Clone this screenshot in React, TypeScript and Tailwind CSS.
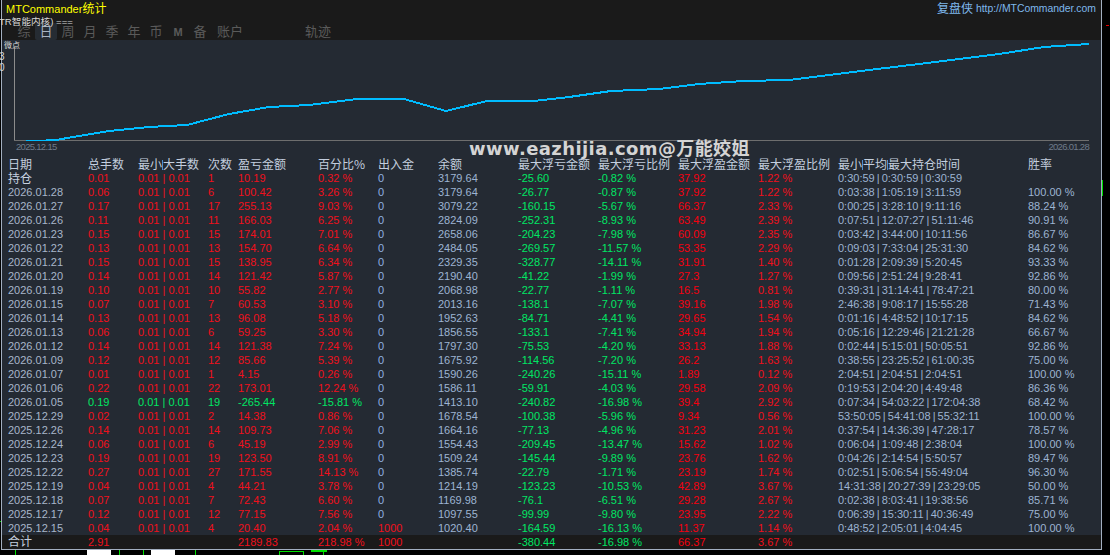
const cols = "grid grid-cols-[80px_50px_70px_30px_80px_60px_60px_80px_80px_80px_80px_80px_190px_70px]";

const red = "text-[#f0101c]";
const green = "text-[#00e664]";
const blue = "text-[#9db4d2]";

const headers = ["日期", "总手数", "最小|大手数", "次数", "盈亏金额", "百分比%", "出入金", "余额", "最大浮亏金额", "最大浮亏比例", "最大浮盈金额", "最大浮盈比例", "最小|平均|最大持仓时间", "胜率"];

// date, lots, trades, profit, pct, cash, balance, maxLoss, lossPct, maxGain, gainPct, times, winRate
const rows: string[][] = [
  ["持仓", "0.01", "1", "10.19", "0.32 %", "0", "3179.64", "-25.60", "-0.82 %", "37.92", "1.22 %", "0:30:59 | 0:30:59 | 0:30:59", ""],
  ["2026.01.28", "0.06", "6", "100.42", "3.26 %", "0", "3179.64", "-26.77", "-0.87 %", "37.92", "1.22 %", "0:03:38 | 1:05:19 | 3:11:59", "100.00 %"],
  ["2026.01.27", "0.17", "17", "255.13", "9.03 %", "0", "3079.22", "-160.15", "-5.67 %", "66.37", "2.33 %", "0:00:25 | 3:28:10 | 9:11:16", "88.24 %"],
  ["2026.01.26", "0.11", "11", "166.03", "6.25 %", "0", "2824.09", "-252.31", "-8.93 %", "63.49", "2.39 %", "0:07:51 | 12:07:27 | 51:11:46", "90.91 %"],
  ["2026.01.23", "0.15", "15", "174.01", "7.01 %", "0", "2658.06", "-204.23", "-7.98 %", "60.09", "2.35 %", "0:03:42 | 3:44:00 | 10:11:56", "86.67 %"],
  ["2026.01.22", "0.13", "13", "154.70", "6.64 %", "0", "2484.05", "-269.57", "-11.57 %", "53.35", "2.29 %", "0:09:03 | 7:33:04 | 25:31:30", "84.62 %"],
  ["2026.01.21", "0.15", "15", "138.95", "6.34 %", "0", "2329.35", "-328.77", "-14.11 %", "31.91", "1.40 %", "0:01:28 | 2:09:39 | 5:20:45", "93.33 %"],
  ["2026.01.20", "0.14", "14", "121.42", "5.87 %", "0", "2190.40", "-41.22", "-1.99 %", "27.3", "1.27 %", "0:09:56 | 2:51:24 | 9:28:41", "92.86 %"],
  ["2026.01.19", "0.10", "10", "55.82", "2.77 %", "0", "2068.98", "-22.77", "-1.11 %", "16.5", "0.81 %", "0:39:31 | 31:14:41 | 78:47:21", "80.00 %"],
  ["2026.01.15", "0.07", "7", "60.53", "3.10 %", "0", "2013.16", "-138.1", "-7.07 %", "39.16", "1.98 %", "2:46:38 | 9:08:17 | 15:55:28", "71.43 %"],
  ["2026.01.14", "0.13", "13", "96.08", "5.18 %", "0", "1952.63", "-84.71", "-4.41 %", "29.65", "1.54 %", "0:01:16 | 4:48:52 | 10:17:15", "84.62 %"],
  ["2026.01.13", "0.06", "6", "59.25", "3.30 %", "0", "1856.55", "-133.1", "-7.41 %", "34.94", "1.94 %", "0:05:16 | 12:29:46 | 21:21:28", "66.67 %"],
  ["2026.01.12", "0.14", "14", "121.38", "7.24 %", "0", "1797.30", "-75.53", "-4.20 %", "33.13", "1.88 %", "0:02:44 | 5:15:01 | 50:05:51", "92.86 %"],
  ["2026.01.09", "0.12", "12", "85.66", "5.39 %", "0", "1675.92", "-114.56", "-7.20 %", "26.2", "1.63 %", "0:38:55 | 23:25:52 | 61:00:35", "75.00 %"],
  ["2026.01.07", "0.01", "1", "4.15", "0.26 %", "0", "1590.26", "-240.26", "-15.11 %", "1.89", "0.12 %", "2:04:51 | 2:04:51 | 2:04:51", "100.00 %"],
  ["2026.01.06", "0.22", "22", "173.01", "12.24 %", "0", "1586.11", "-59.91", "-4.03 %", "29.58", "2.09 %", "0:19:53 | 2:04:20 | 4:49:48", "86.36 %"],
  ["2026.01.05", "0.19", "19", "-265.44", "-15.81 %", "0", "1413.10", "-240.82", "-16.98 %", "39.4", "2.92 %", "0:07:34 | 54:03:22 | 172:04:38", "68.42 %"],
  ["2025.12.29", "0.02", "2", "14.38", "0.86 %", "0", "1678.54", "-100.38", "-5.96 %", "9.34", "0.56 %", "53:50:05 | 54:41:08 | 55:32:11", "100.00 %"],
  ["2025.12.26", "0.14", "14", "109.73", "7.06 %", "0", "1664.16", "-77.13", "-4.96 %", "31.23", "2.01 %", "0:37:54 | 14:36:39 | 47:28:17", "78.57 %"],
  ["2025.12.24", "0.06", "6", "45.19", "2.99 %", "0", "1554.43", "-209.45", "-13.47 %", "15.62", "1.02 %", "0:06:04 | 1:09:48 | 2:38:04", "100.00 %"],
  ["2025.12.23", "0.19", "19", "123.50", "8.91 %", "0", "1509.24", "-145.44", "-9.89 %", "23.76", "1.62 %", "0:04:26 | 2:14:54 | 5:50:57", "89.47 %"],
  ["2025.12.22", "0.27", "27", "171.55", "14.13 %", "0", "1385.74", "-22.79", "-1.71 %", "23.19", "1.74 %", "0:02:51 | 5:06:54 | 55:49:04", "96.30 %"],
  ["2025.12.19", "0.04", "4", "44.21", "3.78 %", "0", "1214.19", "-123.23", "-10.53 %", "42.89", "3.67 %", "14:31:38 | 20:27:39 | 23:29:05", "50.00 %"],
  ["2025.12.18", "0.07", "7", "72.43", "6.60 %", "0", "1169.98", "-76.1", "-6.51 %", "29.28", "2.67 %", "0:02:38 | 8:03:41 | 19:38:56", "85.71 %"],
  ["2025.12.17", "0.12", "12", "77.15", "7.56 %", "0", "1097.55", "-99.99", "-9.80 %", "23.95", "2.22 %", "0:06:39 | 15:30:11 | 40:36:49", "75.00 %"],
  ["2025.12.15", "0.04", "4", "20.40", "2.04 %", "1000", "1020.40", "-164.59", "-16.13 %", "11.37", "1.14 %", "0:48:52 | 2:05:01 | 4:04:45", "100.00 %"],
];

const tabs = ["综", "日", "周", "月", "季", "年", "币", "M", "备"];

const linePoints = "17,102 37,101 57,100 80,96 110,91 150,87 188,85 230,74 270,67 310,65 358,59 405,59 447,71 488,61 535,61 570,57 612,51 660,49 700,44 745,41 790,40 830,35 870,30 920,24 960,19 1000,14 1045,7 1090,4";

// the pipes in the header squeeze in between the glyphs
function HeaderCell({ text }: { text: string }) {
  const parts = text.split("|");
  return (
    <span className="whitespace-nowrap">
      {parts.map((p, i) => (
        <span key={p}>
          {i > 0 && <span className="inline-block w-[1px] h-[10px] bg-[#4f8fd0] align-[-1px]" />}
          {p}
        </span>
      ))}
    </span>
  );
}

function Row({ r }: { r: string[] }) {
  const [date, lots, trades, profit, pct, cash, balance, maxLoss, lossPct, maxGain, gainPct, times, winRate] = r;
  const c = profit.startsWith("-") ? green : red;
  const holding = date === "持仓";
  return (
    <div className={`${cols} h-[14px] items-center`}>
      <span className={holding ? "text-[12px] text-[#c8d2e0] font-['Noto_Sans_CJK_SC']" : "text-[#a8b6ca]"}>{date}</span>
      <span className={c}>{lots}</span>
      <span className={c}>0.01 | 0.01</span>
      <span className={c}>{trades}</span>
      <span className={c}>{profit}</span>
      <span className={c}>{pct}</span>
      <span className={cash === "0" ? "text-[#8fb0e0]" : red}>{cash}</span>
      <span className={blue}>{balance}</span>
      <span className={green}>{maxLoss}</span>
      <span className={green}>{lossPct}</span>
      <span className="text-[#f5000f]">{maxGain}</span>
      <span className={red}>{gainPct}</span>
      <span className={`${blue} [word-spacing:-1px]`}>{times}</span>
      <span className={blue}>{winRate}</span>
    </div>
  );
}

export default function App() {
  return (
    <div className="w-[1110px] h-[555px] bg-black overflow-hidden flex flex-col font-['Liberation_Sans','Noto_Sans_CJK_SC',sans-serif] text-[11px] leading-[14px]">
      <div className="flex h-[550px] shrink-0">
        {/* left edge of the chart behind the window */}
        <div className="w-[2px] relative">
          <div className="absolute left-0 top-[521px] w-[2px] h-[1px] bg-[#00e000]" />
        </div>

        <div className="relative w-[1101px] flex flex-col border-x border-b border-[#a3afc0]">
          {/* title bar */}
          <div className="h-[40px] shrink-0 bg-[#1a1a1a] flex flex-col">
            <div className="h-[23px] flex justify-between items-start pl-[4px] pr-[5px] pt-[2px]">
              <span className="text-[11px] text-[#ffff00]">MTCommander<span className="text-[12px]">统计</span></span>
              <span className="text-[#7fb8ec] text-[10.4px] flex items-center gap-[3px]">
                <span className="text-[12px]">复盘侠</span>
                http://MTCommander.com
              </span>
            </div>
            <div className="h-[17px] flex items-center pl-[11px] text-[13px] text-[#5a5a5a]">
              {tabs.map((t) => (
                <span
                  key={t}
                  className={`w-[22px] h-[17px] flex items-center justify-center ${t === "日" ? "bg-[#262c33] text-[#aab4c2] rounded-[2px]" : ""} ${t === "M" ? "text-[11px] font-bold" : ""}`}
                >
                  {t}
                </span>
              ))}
              <span className="w-[38px] text-center">账户</span>
              <span className="w-[38px] text-center ml-[50px]">轨迹</span>
            </div>
          </div>

          {/* equity chart */}
          <div className="h-[117px] shrink-0 bg-[#242a33] flex flex-col">
            <svg width="1099" height="101" viewBox="0 0 1099 101" className="block shrink-0">
              <line x1="12.5" y1="7" x2="12.5" y2="100.5" stroke="#8c8c8c" />
              <line x1="12" y1="100.5" x2="1087" y2="100.5" stroke="#6e6e6e" />
              <polyline points={linePoints} transform="translate(-3 0)" fill="none" stroke="#00bcff" strokeWidth="2" shapeRendering="crispEdges" />
            </svg>
            <div className="flex justify-between pl-[14px] pr-[12px] pt-[1px] text-[9.5px] tracking-[-0.7px] text-[#6f7b8a] leading-[10px]">
              <span>2025.12.15</span>
              <span>2026.01.28</span>
            </div>
          </div>

          {/* daily table */}
          <div className="flex-1 bg-[#242a33] pl-[6px]">
            <div className={`${cols} h-[14px] items-center text-[12px] text-[#c3cede] font-['Noto_Sans_CJK_SC','Liberation_Sans',sans-serif]`}>
              {headers.map((h) => (
                <HeaderCell key={h} text={h} />
              ))}
            </div>
            {rows.map((r) => (
              <Row key={r[0]} r={r} />
            ))}
          </div>

          {/* totals */}
          <div className={`${cols} h-[14px] shrink-0 items-center bg-[#1a1a1a] pl-[6px]`}>
            <span className="text-[12px] text-[#c3cede]">合计</span>
            <span className={red}>2.91</span>
            <span />
            <span />
            <span className={red}>2189.83</span>
            <span className={red}>218.98 %</span>
            <span className={red}>1000</span>
            <span />
            <span className={green}>-380.44</span>
            <span className={green}>-16.98 %</span>
            <span className="text-[#f5000f]">66.37</span>
            <span className={red}>3.67 %</span>
            <span />
            <span />
          </div>

          {/* strays and watermark lying over the window */}
          <span className="absolute left-[-3px] top-[15px] text-[9.6px] text-[#d8d8d8]">TR智能内核) ===</span>
          <span className="absolute left-[2px] top-[39px] text-[8px] text-[#d8d8d8]">微点</span>
          <span className="absolute left-[-3px] top-[52px] text-[10px] text-[#d8d8d8] leading-[10px]">3</span>
          <span className="absolute left-[-3px] top-[63px] text-[10px] text-[#d8d8d8] leading-[10px]">0</span>
          <span className="absolute left-[467px] top-[141px] text-[18px] leading-[16px] font-bold text-[#d4d4d4] font-['DejaVu_Sans','Noto_Sans_CJK_SC',sans-serif] whitespace-nowrap tracking-[0.4px]">
            www.eazhijia.com@万能姣姐
          </span>
        </div>

        {/* right edge of the chart behind the window */}
        <svg width="8" height="550" viewBox="0 0 8 550" className="block shrink-0 overflow-visible">
          <rect x="4" y="25" width="3" height="1" fill="#e00000" />
          <rect x="0" y="180" width="1" height="16" fill="#00e000" />
          <path d="M0 37 L-5 41 L0 45 Z" fill="#b0b0b0" />
        </svg>
      </div>

      {/* candles visible under the window */}
      <svg width="1110" height="5" viewBox="0 0 1110 5" className="block shrink-0">
        <g fill="#00e000">
          <rect x="15" y="0" width="1" height="5" />
          <rect x="119" y="0" width="1" height="5" />
          <rect x="143" y="0" width="1" height="5" />
          <rect x="195" y="0" width="1" height="5" />
          <rect x="279" y="1" width="24" height="1" />
          <rect x="279" y="1" width="1" height="4" />
          <rect x="303" y="1" width="1" height="4" />
          <rect x="311" y="0" width="16" height="2" />
          <rect x="323" y="0" width="1" height="5" />
        </g>
        <rect x="87" y="0" width="24" height="5" fill="#ffffff" />
        <rect x="151" y="0" width="24" height="5" fill="#ffffff" />
      </svg>
    </div>
  );
}
